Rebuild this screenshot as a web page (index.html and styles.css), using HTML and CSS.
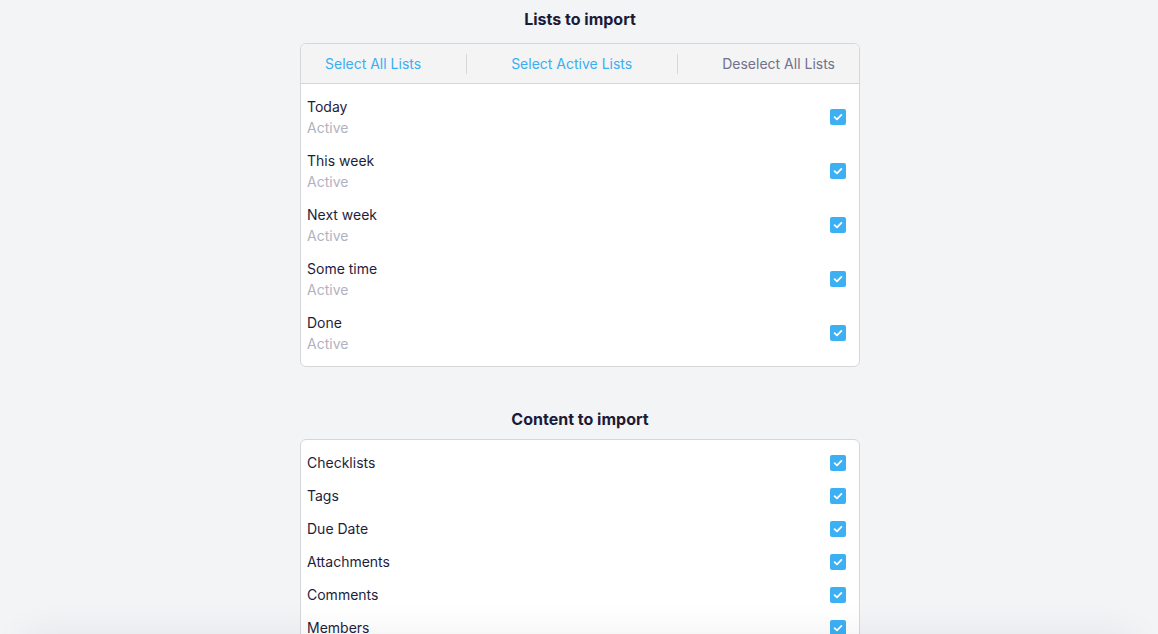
FILE: index.html
```html
<!DOCTYPE html>
<html lang="en">
<head>
<meta charset="utf-8">
<title>Import</title>
<link rel="stylesheet" href="styles.css">
</head>
<body>
<main class="page">
  <section class="section section-lists">
    <h2 class="section-title">Lists to import</h2>
    <div class="card">
      <div class="card-header">
        <button class="hbtn hbtn-blue">Select All Lists</button>
        <span class="hdivider"></span>
        <button class="hbtn hbtn-blue">Select Active Lists</button>
        <span class="hdivider"></span>
        <button class="hbtn hbtn-gray">Deselect All Lists</button>
      </div>
      <ul class="rows rows-lists">
        <li class="row"><div class="row-text"><span class="row-name">Today</span><span class="row-status">Active</span></div><span class="cb"><svg viewBox="0 0 16 16" width="16" height="16"><path d="M4.6 8.2 L7 10.4 L11.4 5.9" fill="none" stroke="#fff" stroke-width="1.8" stroke-linecap="round" stroke-linejoin="round"/></svg></span></li>
        <li class="row"><div class="row-text"><span class="row-name">This week</span><span class="row-status">Active</span></div><span class="cb"><svg viewBox="0 0 16 16" width="16" height="16"><path d="M4.6 8.2 L7 10.4 L11.4 5.9" fill="none" stroke="#fff" stroke-width="1.8" stroke-linecap="round" stroke-linejoin="round"/></svg></span></li>
        <li class="row"><div class="row-text"><span class="row-name">Next week</span><span class="row-status">Active</span></div><span class="cb"><svg viewBox="0 0 16 16" width="16" height="16"><path d="M4.6 8.2 L7 10.4 L11.4 5.9" fill="none" stroke="#fff" stroke-width="1.8" stroke-linecap="round" stroke-linejoin="round"/></svg></span></li>
        <li class="row"><div class="row-text"><span class="row-name">Some time</span><span class="row-status">Active</span></div><span class="cb"><svg viewBox="0 0 16 16" width="16" height="16"><path d="M4.6 8.2 L7 10.4 L11.4 5.9" fill="none" stroke="#fff" stroke-width="1.8" stroke-linecap="round" stroke-linejoin="round"/></svg></span></li>
        <li class="row"><div class="row-text"><span class="row-name">Done</span><span class="row-status">Active</span></div><span class="cb"><svg viewBox="0 0 16 16" width="16" height="16"><path d="M4.6 8.2 L7 10.4 L11.4 5.9" fill="none" stroke="#fff" stroke-width="1.8" stroke-linecap="round" stroke-linejoin="round"/></svg></span></li>
      </ul>
    </div>
  </section>

  <section class="section section-content">
    <h2 class="section-title">Content to import</h2>
    <div class="card">
      <ul class="rows rows-content">
        <li class="row"><span class="row-name">Checklists</span><span class="cb"><svg viewBox="0 0 16 16" width="16" height="16"><path d="M4.6 8.2 L7 10.4 L11.4 5.9" fill="none" stroke="#fff" stroke-width="1.8" stroke-linecap="round" stroke-linejoin="round"/></svg></span></li>
        <li class="row"><span class="row-name">Tags</span><span class="cb"><svg viewBox="0 0 16 16" width="16" height="16"><path d="M4.6 8.2 L7 10.4 L11.4 5.9" fill="none" stroke="#fff" stroke-width="1.8" stroke-linecap="round" stroke-linejoin="round"/></svg></span></li>
        <li class="row"><span class="row-name">Due Date</span><span class="cb"><svg viewBox="0 0 16 16" width="16" height="16"><path d="M4.6 8.2 L7 10.4 L11.4 5.9" fill="none" stroke="#fff" stroke-width="1.8" stroke-linecap="round" stroke-linejoin="round"/></svg></span></li>
        <li class="row"><span class="row-name">Attachments</span><span class="cb"><svg viewBox="0 0 16 16" width="16" height="16"><path d="M4.6 8.2 L7 10.4 L11.4 5.9" fill="none" stroke="#fff" stroke-width="1.8" stroke-linecap="round" stroke-linejoin="round"/></svg></span></li>
        <li class="row"><span class="row-name">Comments</span><span class="cb"><svg viewBox="0 0 16 16" width="16" height="16"><path d="M4.6 8.2 L7 10.4 L11.4 5.9" fill="none" stroke="#fff" stroke-width="1.8" stroke-linecap="round" stroke-linejoin="round"/></svg></span></li>
        <li class="row"><span class="row-name">Members</span><span class="cb"><svg viewBox="0 0 16 16" width="16" height="16"><path d="M4.6 8.2 L7 10.4 L11.4 5.9" fill="none" stroke="#fff" stroke-width="1.8" stroke-linecap="round" stroke-linejoin="round"/></svg></span></li>
      </ul>
    </div>
  </section>
</main>
<div class="footer-shadow"></div>
</body>
</html>
```

FILE: styles.css
```css
* { box-sizing: border-box; }

html, body {
  margin: 0;
  padding: 0;
  background: #f3f4f6;
  font-family: Inter, "Noto Sans", "Liberation Sans", sans-serif;
  color: #1c1c3a;
  overflow: hidden;
}

.page {
  width: 560px;
  margin-left: calc(50% - 279px);
  padding-top: 7px;
}

.section-title {
  margin: 0;
  font-size: 16px;
  line-height: 24px;
  font-weight: 700;
  text-align: center;
  color: #1b1b38;
}

.section-lists .section-title { margin-bottom: 12px; }
.section-content { margin-top: 40px; }
.section-content .section-title { margin-bottom: 8px; }

.card {
  background: #fff;
  border: 1px solid #d7d7db;
  border-radius: 6px;
  overflow: hidden;
}

.card-header {
  height: 40px;
  background: #f4f4f5;
  border-bottom: 1px solid #d7d7db;
  display: flex;
  align-items: center;
  justify-content: space-between;
  padding: 0 24px;
}

.hbtn {
  border: 0;
  background: none;
  padding: 0;
  font-family: inherit;
  font-size: 14px;
  line-height: 21px;
  cursor: pointer;
}
.hbtn-blue { color: #38aff2; }
.hbtn-gray { color: #71718a; }

.hdivider {
  width: 1px;
  height: 20px;
  background: #d7d7db;
}

.rows {
  list-style: none;
  margin: 0;
  padding: 12px 13px 12px 6px;
  display: flex;
  flex-direction: column;
  gap: 12px;
}

.row {
  display: flex;
  align-items: center;
  justify-content: space-between;
}

.row-text {
  display: flex;
  flex-direction: column;
}

.row-name {
  font-size: 14px;
  line-height: 21px;
  color: #1e1e3c;
}

.row-status {
  font-size: 14px;
  line-height: 21px;
  color: #b2b2bf;
}

.rows-lists .cb { margin-top: -1px; }

.cb {
  width: 16px;
  height: 16px;
  border-radius: 2px;
  background: #3db0f4;
  display: block;
  flex: none;
}
.cb svg { display: block; }

.footer-shadow {
  position: fixed;
  left: 20px;
  right: 20px;
  bottom: -30px;
  height: 30px;
  background: #fff;
  border-radius: 30px;
  box-shadow: 0 0 36px rgba(20, 30, 60, 0.07);
}
```
